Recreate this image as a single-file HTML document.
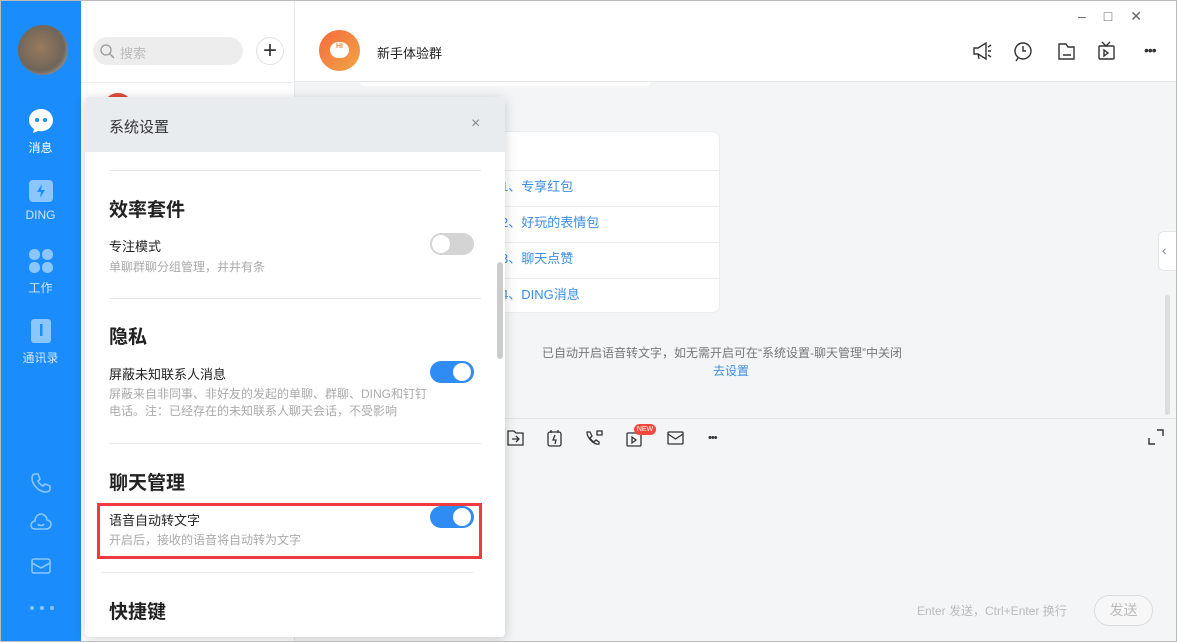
<!DOCTYPE html>
<html><head><meta charset="utf-8"><style>
*{box-sizing:border-box;margin:0;padding:0}
body{width:1177px;height:642px;overflow:hidden;font-family:"Liberation Sans","Noto Sans CJK SC",sans-serif;background:#f4f5f6;position:relative;font-size:13px;color:#222}
.abs{position:absolute}
.side{left:0;top:0;width:81px;height:642px;background:#1a8cfb}
.nav{width:81px;text-align:center;color:#cfe6ff;font-size:12px}
.list{left:81px;top:0;width:214px;height:642px;background:#fff;border-right:1px solid #e8e8e8}
.head{left:295px;top:0;width:882px;height:82px;background:#fff;border-bottom:1px solid #e6e6e6}
.modal{left:85px;top:97px;width:420px;height:540px;background:#fff;border-radius:4px;box-shadow:0 2px 12px rgba(0,0,0,.18);overflow:hidden}
.mh{height:55px;background:#e9ecef;padding:19px 0 0 24px;font-size:15px;color:#333}
.sec{position:absolute;left:24px;font-size:19px;font-weight:bold;color:#222}
.lbl{position:absolute;left:24px;font-size:13px;color:#222}
.sub{position:absolute;left:24px;font-size:12px;color:#aaa;line-height:17px}
.hr{position:absolute;left:24px;width:372px;height:1px;background:#e8e8e8}
.tg{position:absolute;left:345px;width:44px;height:22px;border-radius:11px;background:#2f8cf5}
.tg::after{content:"";position:absolute;right:3px;top:2px;width:18px;height:18px;border-radius:50%;background:#fff}
.tg.off{background:#d4d4d4}.tg.off::after{right:auto;left:2px}
.card{left:480px;top:131px;width:240px;height:182px;background:#fff;border-radius:8px;border:1px solid #ececec}
.row{position:absolute;left:0;width:240px;height:36px;border-top:1px solid #ececec;color:#3a8ee6;font-size:13px;padding:5px 0 0 20px}
.frame{left:0;top:0;width:1177px;height:642px;border:1px solid #bbb;pointer-events:none}
</style></head><body>
<div class="abs side">
 <div class="abs" style="left:18px;top:25px;width:50px;height:50px;border-radius:50%;background:radial-gradient(circle at 45% 45%,#9a7a5c,#6f655a 60%,#c9d0d4);"></div>
 <div class="abs nav" style="top:108px"><svg width="26" height="26" viewBox="0 0 26 26"><path d="M13 1C6 1 1 6 1 12c0 4 2 7 5 9l-1 4 5-2c1 0 2 .2 3 .2 7 0 12-5 12-11S20 1 13 1z" fill="#fff"/><circle cx="9" cy="12" r="2" fill="#1a8cfb"/><circle cx="17" cy="12" r="2" fill="#1a8cfb"/></svg><div style="color:#fff;margin-top:2px">消息</div></div>
 <div class="abs nav" style="top:177px"><svg width="26" height="26" viewBox="0 0 26 26"><rect x="1" y="3" width="24" height="22" rx="4" fill="#8cc6ff"/><path d="M14 7l-5 8h4l-1 6 5-8h-4z" fill="#1a8cfb"/></svg><div style="margin-top:2px">DING</div></div>
 <div class="abs nav" style="top:248px"><svg width="26" height="26" viewBox="0 0 26 26" fill="#8cc6ff"><rect x="1" y="1" width="11" height="11" rx="5"/><rect x="14" y="1" width="11" height="11" rx="5"/><rect x="1" y="14" width="11" height="11" rx="5"/><rect x="14" y="14" width="11" height="11" rx="5"/></svg><div style="margin-top:2px">工作</div></div>
 <div class="abs nav" style="top:318px"><svg width="26" height="26" viewBox="0 0 26 26"><rect x="3" y="1" width="20" height="24" rx="3" fill="#8cc6ff"/><rect x="12" y="6" width="2.5" height="12" fill="#1a8cfb"/></svg><div style="margin-top:2px">通讯录</div></div>
 <svg class="abs" style="left:30px;top:472px" width="22" height="22" viewBox="0 0 22 22"><path d="M5 2l3 0 2 5-2 2c1 2 3 4 5 5l2-2 5 2v3c0 2-2 3-4 3C9 20 2 13 2 6c0-2 1-4 3-4z" fill="none" stroke="#8cc6ff" stroke-width="1.6"/></svg>
 <svg class="abs" style="left:30px;top:512px" width="22" height="20" viewBox="0 0 22 20"><path d="M5 17C2 17 1 15 1 13c0-2 2-4 4-4 0-4 3-7 6-7s6 3 6 6c2 0 4 2 4 4 0 3-2 5-5 5z" fill="none" stroke="#8cc6ff" stroke-width="1.6"/><path d="M8 12c1 2 5 2 6 0" fill="none" stroke="#8cc6ff" stroke-width="1.6"/></svg>
 <svg class="abs" style="left:31px;top:558px" width="20" height="16" viewBox="0 0 20 16"><rect x="1" y="1" width="18" height="14" rx="2" fill="none" stroke="#8cc6ff" stroke-width="1.6"/><path d="M1 5l9 5 9-5" fill="none" stroke="#8cc6ff" stroke-width="1.6"/></svg>
 <div class="abs" style="left:30px;top:606px;width:24px;display:flex;justify-content:space-between"><i style="width:4px;height:4px;border-radius:50%;background:#8cc6ff"></i><i style="width:4px;height:4px;border-radius:50%;background:#8cc6ff"></i><i style="width:4px;height:4px;border-radius:50%;background:#8cc6ff"></i></div>
</div>
<div class="abs list">
 <div class="abs" style="left:12px;top:37px;width:150px;height:28px;border-radius:14px;background:#ededed;color:#bbb;font-size:13px;padding:6px 0 0 27px">搜索</div>
 <svg class="abs" style="left:18px;top:43px" width="16" height="16" viewBox="0 0 16 16"><circle cx="7" cy="7" r="5" fill="none" stroke="#999" stroke-width="1.3"/><path d="M11 11l4 4" stroke="#999" stroke-width="1.3"/></svg>
 <div class="abs" style="left:175px;top:37px;width:28px;height:28px;border-radius:50%;border:1px solid #e3e3e3;text-align:center;line-height:25px;font-size:24px;color:#333;font-weight:300">+</div>
 <div class="abs" style="left:0;top:82px;width:214px;height:1px;background:#eee"></div>
 <div class="abs" style="left:22px;top:93px;width:30px;height:30px;border-radius:50%;background:#e04a3a"></div>
</div>
<div class="abs head">
 <div class="abs" style="left:24px;top:30px;width:41px;height:41px;border-radius:50%;background:linear-gradient(135deg,#f56b3d,#f0a548)"></div>
 <div class="abs" style="left:35px;top:42px;width:19px;height:16px;border-radius:8px;background:#fff;color:#f08a3e;font-size:7px;font-weight:bold;text-align:center;line-height:10px">HI</div>
 <div class="abs" style="left:82px;top:43px;font-size:13px;color:#222">新手体验群</div>
 <div class="abs" style="left:783px;top:8px;font-size:14px;color:#666;letter-spacing:18px">–□✕</div>
 <svg class="abs" style="left:676px;top:40px" width="160" height="22" viewBox="0 0 160 22" fill="none" stroke="#333" stroke-width="1.4"><path d="M3 8h4l8-5v16l-8-5H3zM7 14l1 5M17 7l3-2M17 11h3M17 15l3 2"/><circle cx="52" cy="11" r="8"/><path d="M52 6v5h3M47 18l-2 3"/><path d="M88 4h7l2 3h6v12H88z M92 15h8"/><rect x="128" y="6" width="15" height="13" rx="1"/><path d="M131 2l4 4 4-4M133 10v6l4-3z"/></svg>
 <div class="abs" style="left:849px;top:42px;font-size:14px;color:#333;letter-spacing:-1px">•••</div>
</div>
<div class="abs" style="left:360px;top:82px;width:290px;height:4px;background:#fff;border-radius:0 0 8px 8px"></div>
<div class="abs card">
 <div class="row" style="top:38px">1、专享红包</div>
 <div class="row" style="top:74px">2、好玩的表情包</div>
 <div class="row" style="top:110px">3、聊天点赞</div>
 <div class="row" style="top:146px">4、DING消息</div>
</div>
<div class="abs" style="left:542px;top:344px;font-size:12px;color:#777">已自动开启语音转文字，如无需开启可在“系统设置-聊天管理”中关闭</div>
<div class="abs" style="left:713px;top:362px;font-size:12px;color:#3a8ee6">去设置</div>
<div class="abs" style="left:1165px;top:295px;width:5px;height:120px;border-radius:3px;background:#ddd"></div>
<div class="abs" style="left:1158px;top:231px;width:19px;height:40px;background:#fff;border-radius:6px 0 0 6px;border:1px solid #e6e6e6;color:#888;font-size:14px;padding:10px 0 0 3px">‹</div>
<div class="abs" style="left:295px;top:418px;width:882px;height:1px;background:#e3e3e3"></div>
<svg class="abs" style="left:505px;top:428px" width="220" height="20" viewBox="0 0 220 20" fill="none" stroke="#333" stroke-width="1.3"><path d="M3 3h6l2 2h7v12H3zM7 11h7M11 8l3 3-3 3"/><rect x="43" y="4" width="13" height="14" rx="2"/><path d="M46 2v3M53 2v3M50 7l-2 5h3l-1 4"/><path d="M82 4h3l2 4-2 2c1 2 2 3 4 4l2-2 3 2v2c-5 1-12-6-12-12zM92 3h5v4h-5z"/><rect x="122" y="5" width="14" height="13" rx="1"/><path d="M127 9v6l4-3z"/><rect x="163" y="4" width="15" height="12" rx="1"/><path d="M163 6l7.5 5 7.5-5"/></svg>
<div class="abs" style="left:634px;top:424px;width:22px;height:11px;border-radius:6px;background:#f04a3c;color:#fff;font-size:7px;text-align:center;line-height:11px">NEW</div>
<div class="abs" style="left:708px;top:432px;font-size:11px;color:#333;letter-spacing:-1px">•••</div>
<svg class="abs" style="left:1148px;top:429px" width="16" height="16" viewBox="0 0 16 16" fill="none" stroke="#333" stroke-width="1.4"><path d="M9 1h6v6M1 9v6h6"/></svg>
<div class="abs" style="left:917px;top:602px;font-size:12px;color:#bbb">Enter 发送，Ctrl+Enter 换行</div>
<div class="abs" style="left:1094px;top:595px;width:59px;height:31px;border-radius:16px;border:1px solid #ddd;color:#bbb;font-size:14px;text-align:center;line-height:29px;background:#f7f7f7">发送</div>
<div class="abs modal">
 <div class="mh">系统设置</div>
 <div class="abs" style="left:386px;top:18px;font-size:16px;color:#888">×</div>
 <div class="hr" style="top:73px"></div>
 <div class="sec" style="top:98px">效率套件</div>
 <div class="lbl" style="top:139px">专注模式</div>
 <div class="tg off" style="top:136px"></div>
 <div class="sub" style="top:162px">单聊群聊分组管理，井井有条</div>
 <div class="hr" style="top:201px"></div>
 <div class="sec" style="top:225px">隐私</div>
 <div class="lbl" style="top:267px">屏蔽未知联系人消息</div>
 <div class="tg" style="top:264px"></div>
 <div class="sub" style="top:289px;width:320px">屏蔽来自非同事、非好友的发起的单聊、群聊、DING和钉钉电话。注：已经存在的未知联系人聊天会话，不受影响</div>
 <div class="hr" style="top:346px"></div>
 <div class="sec" style="top:371px">聊天管理</div>
 <div class="abs" style="left:12px;top:406px;width:385px;height:56px;border:3px solid #f03a3f"></div>
 <div class="lbl" style="top:413px">语音自动转文字</div>
 <div class="tg" style="top:409px"></div>
 <div class="sub" style="top:435px">开启后，接收的语音将自动转为文字</div>
 <div class="hr" style="top:475px;left:16px"></div>
 <div class="sec" style="top:500px">快捷键</div>
 <div class="abs" style="left:412px;top:165px;width:6px;height:97px;border-radius:3px;background:#ccc"></div>
</div>
<div class="abs frame"></div>
</body></html>
